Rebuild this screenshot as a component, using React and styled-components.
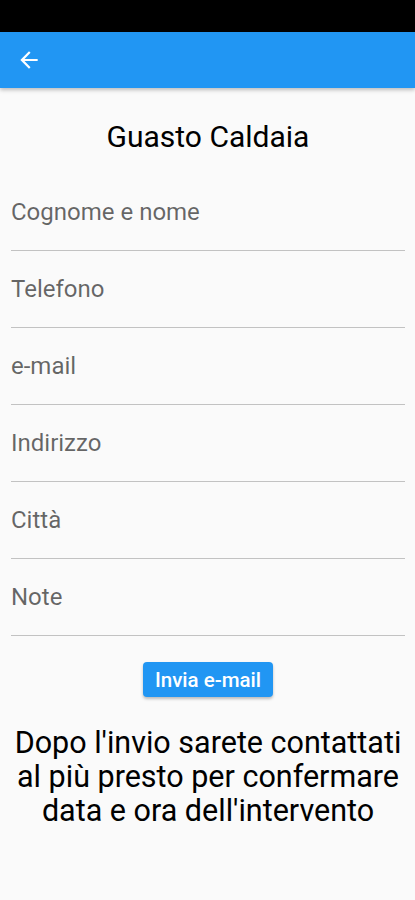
import React from 'react';
import styled, { createGlobalStyle } from 'styled-components';

const GlobalStyle = createGlobalStyle`
  html, body {
    margin: 0;
    padding: 0;
    background: #fafafa;
  }
  body {
    font-family: Roboto, "Liberation Sans", sans-serif;
  }
`;

const Screen = styled.div`
  width: 415px;
  min-height: 900px;
  background: #fafafa;
  display: flex;
  flex-direction: column;
`;

const StatusBar = styled.div`
  height: 32px;
  background: #000;
`;

const AppBar = styled.header`
  height: 56px;
  background: #2196f3;
  display: flex;
  align-items: center;
  padding-left: 16px;
  box-shadow: 0 2px 4px rgba(0, 0, 0, 0.25);
  position: relative;
  z-index: 1;
`;

const BackButton = styled.button`
  border: none;
  background: transparent;
  padding: 0;
  width: 26px;
  height: 26px;
  display: flex;
  align-items: center;
  justify-content: center;
  color: #fff;
  cursor: pointer;
`;

const Content = styled.main`
  display: flex;
  flex-direction: column;
  padding: 0 10px 0 11px;
`;

const Title = styled.h1`
  margin: 0;
  padding: 31px 0 19px;
  font-size: 30px;
  line-height: 36px;
  font-weight: 400;
  color: #000;
  text-align: center;
`;

const Field = styled.label`
  display: flex;
  height: 76px;
  border-bottom: 1.5px solid #c2c2c2;
  box-sizing: content-box;
`;

const Input = styled.input`
  border: none;
  background: transparent;
  outline: none;
  width: 100%;
  padding: 24px 0 24px;
  margin: 0;
  font-family: Roboto, "Liberation Sans", sans-serif;
  font-size: 24px;
  line-height: 28px;
  height: 28px;
  color: #000;

  &::placeholder {
    color: rgba(0, 0, 0, 0.6);
  }
`;

const Actions = styled.div`
  display: flex;
  justify-content: center;
  padding-top: 26px;
`;

const SendButton = styled.button`
  border: none;
  border-radius: 4px;
  background: #2196f3;
  color: #fff;
  height: 35px;
  padding: 0 12px;
  font-family: Roboto, "Liberation Sans", sans-serif;
  font-size: 20.5px;
  font-weight: 500;
  box-shadow: 0 2px 3px rgba(0, 0, 0, 0.25);
  cursor: pointer;
`;

const Notice = styled.p`
  margin: 29px 0 0;
  font-size: 30.5px;
  line-height: 34px;
  color: #000;
  text-align: center;
`;

const fields = ['Cognome e nome', 'Telefono', 'e-mail', 'Indirizzo', 'Città', 'Note'];

function BackArrow() {
  return (
    <svg width="26" height="26" viewBox="0 0 24 24" fill="currentColor">
      <path d="M20 11H7.83l5.59-5.59L12 4l-8 8 8 8 1.41-1.41L7.83 13H20v-2z" />
    </svg>
  );
}

export default function App() {
  return (
    <>
      <GlobalStyle />
      <Screen>
        <StatusBar />
        <AppBar>
          <BackButton aria-label="Indietro">
            <BackArrow />
          </BackButton>
        </AppBar>
        <Content>
          <Title>Guasto Caldaia</Title>
          {fields.map(name => (
            <Field key={name}>
              <Input placeholder={name} />
            </Field>
          ))}
          <Actions>
            <SendButton>Invia e-mail</SendButton>
          </Actions>
          <Notice>
            Dopo l'invio sarete contattati al più presto per confermare data e
            ora dell'intervento
          </Notice>
        </Content>
      </Screen>
    </>
  );
}
